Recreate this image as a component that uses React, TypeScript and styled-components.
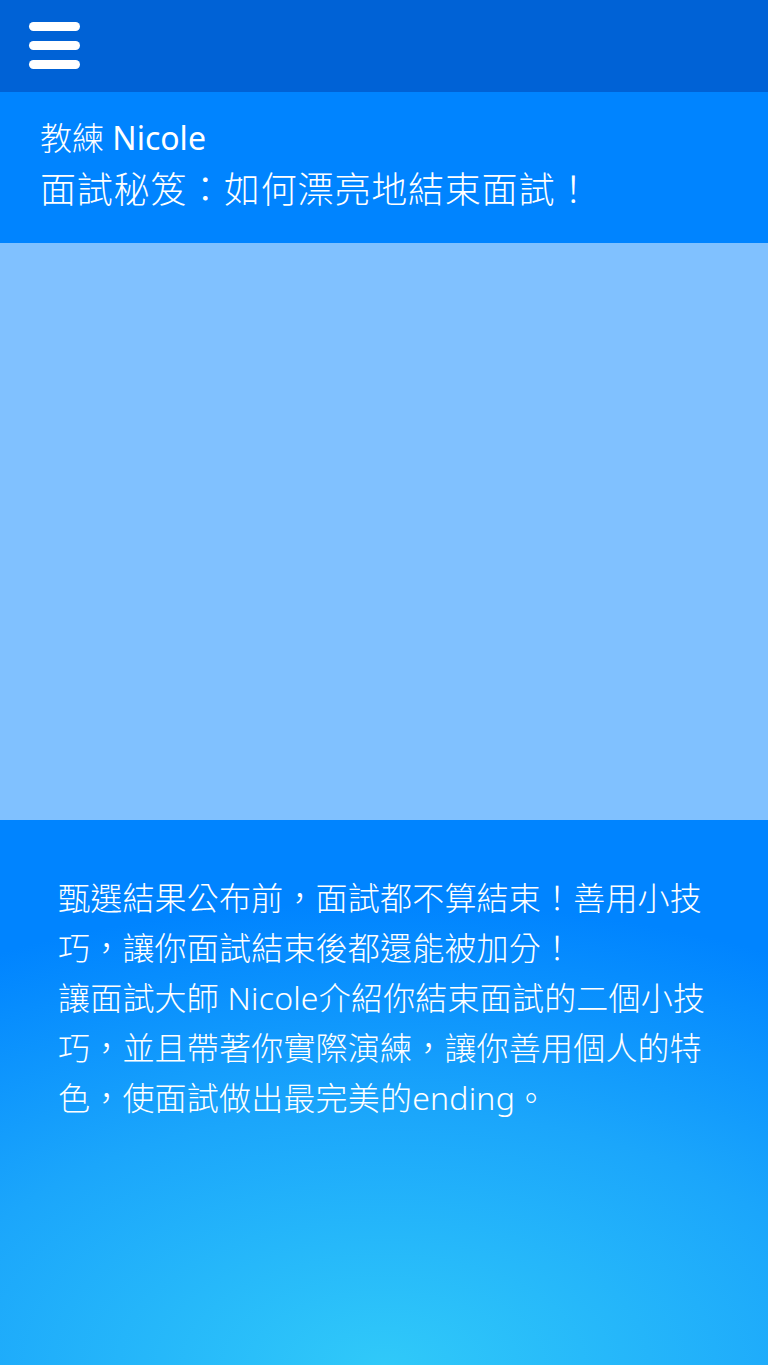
import styled, { createGlobalStyle } from "styled-components";

const GlobalStyle = createGlobalStyle`
    html, body {
        margin: 0;
        padding: 0;
    }
    body {
        font-family: "Noto Sans", "Noto Sans CJK TC", sans-serif;
        background: #0084ff;
    }
`;

const Page = styled.div`
    width: 768px;
    min-height: 1365px;
    display: flex;
    flex-direction: column;
`;

const TopBar = styled.header`
    height: 92px;
    background-color: #0062d6;
    display: flex;
    align-items: center;
    padding: 0 29px;
    box-sizing: border-box;
`;

const MenuButton = styled.button`
    border: none;
    background: transparent;
    padding: 0;
    width: 51px;
    height: 47px;
    display: flex;
    flex-direction: column;
    justify-content: space-between;
    cursor: pointer;
    margin-top: -2px;
`;

const MenuBar = styled.span`
    display: block;
    height: 9px;
    border-radius: 5px;
    background: #ffffff;
`;

const TitleBlock = styled.section`
    background-color: #0084ff;
    color: #ffffff;
    padding: 22px 40px 0;
    height: 151px;
    box-sizing: border-box;
`;

const Coach = styled.div`
    font-size: 32px;
    font-weight: 300;
    line-height: 48px;
`;

const CoachName = styled.span`
    font-weight: 400;
`;

const Title = styled.h1`
    margin: 0;
    font-size: 36px;
    font-weight: 300;
    letter-spacing: 0.8px;
    line-height: 56px;
`;

const Video = styled.div`
    height: 577px;
    background-color: #80c1ff;
`;

const Intro = styled.section`
    flex: 1;
    padding: 53px 58px 40px;
    background: radial-gradient(ellipse 110% 85% at 50% 100%, #30c9f9 0%, #1ba6fb 55%, #0084ff 100%);
    color: #ffffff;
`;

const Paragraph = styled.p`
    margin: 0;
    font-size: 32px;
    font-weight: 300;
    letter-spacing: 0.2px;
    line-height: 50px;
`;

const intro = [
    "甄選結果公布前，面試都不算結束！善用小技巧，讓你面試結束後都還能被加分！",
    "讓面試大師 Nicole介紹你結束面試的二個小技巧，並且帶著你實際演練，讓你善用個人的特色，使面試做出最完美的ending。",
];

function App() {
    return (
        <Page lang="zh-Hant-TW">
            <GlobalStyle />
            <TopBar>
                <MenuButton aria-label="menu">
                    <MenuBar />
                    <MenuBar />
                    <MenuBar />
                </MenuButton>
            </TopBar>
            <TitleBlock>
                <Coach>教練 <CoachName>Nicole</CoachName></Coach>
                <Title>面試秘笈：如何漂亮地結束面試！</Title>
            </TitleBlock>
            <Video />
            <Intro>
                {intro.map((text) => (
                    <Paragraph key={text}>{text}</Paragraph>
                ))}
            </Intro>
        </Page>
    );
}

export default App;
